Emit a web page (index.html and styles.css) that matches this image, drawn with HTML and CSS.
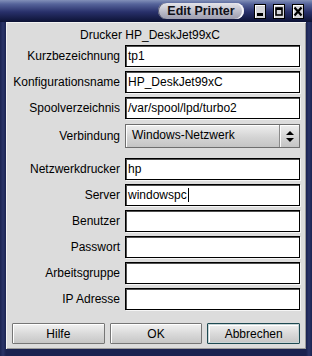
FILE: index.html
```html
<!DOCTYPE html>
<html lang="de">
<head>
    <meta charset="UTF-8">
    <meta name="viewport" content="width=device-width, initial-scale=1.0">
    <title>Edit Printer</title>
    <link rel="stylesheet" href="styles.css">
</head>
<body>
    <div class="window">
        <div class="titlebar">
            <div class="title">Edit Printer</div>
            <div class="wm-buttons">
                <span class="wm-btn">
                    <svg width="10" height="13" viewBox="0 0 10 13"><rect x="2" y="8" width="6" height="3" fill="#000"/></svg>
                </span>
                <span class="wm-btn">
                    <svg width="10" height="13" viewBox="0 0 10 13"><rect x="2" y="3" width="6" height="7" fill="none" stroke="#000" stroke-width="1.6"/><rect x="2" y="3" width="6" height="2" fill="#000"/></svg>
                </span>
                <span class="wm-btn">
                    <svg width="10" height="13" viewBox="0 0 10 13"><path d="M1.5 2.5 L8.5 10.5 M8.5 2.5 L1.5 10.5" stroke="#000" stroke-width="2.2"/></svg>
                </span>
            </div>
        </div>

        <div class="dialog">
            <div class="heading">Drucker HP_DeskJet99xC</div>

            <div class="form-grid">
                <label>Kurzbezeichnung</label>
                <div class="field">tp1</div>
                <label>Konfigurationsname</label>
                <div class="field">HP_DeskJet99xC</div>
                <label>Spoolverzeichnis</label>
                <div class="field">/var/spool/lpd/turbo2</div>
                <label class="combo-label">Verbindung</label>
                <div class="combo">
                    <span class="combo-text">Windows-Netzwerk</span>
                    <span class="combo-arrow">
                        <svg width="8" height="11" viewBox="0 0 8 11"><path d="M4 0 L8 4 L0 4 Z M0 7 L8 7 L4 11 Z" fill="#000"/></svg>
                    </span>
                </div>
            </div>

            <div class="form-grid second">
                <label>Netzwerkdrucker</label>
                <div class="field">hp</div>
                <label>Server</label>
                <div class="field">windowspc<span class="caret"></span></div>
                <label>Benutzer</label>
                <div class="field"></div>
                <label>Passwort</label>
                <div class="field"></div>
                <label>Arbeitsgruppe</label>
                <div class="field"></div>
                <label>IP Adresse</label>
                <div class="field"></div>
            </div>

            <div class="buttons">
                <button type="button">Hilfe</button>
                <button type="button">OK</button>
                <button type="button" class="default">Abbrechen</button>
            </div>
        </div>
    </div>
</body>
</html>
```

FILE: styles.css
```css
* {
    box-sizing: border-box;
}

body {
    margin: 0;
    padding: 0;
    background-color: #dcdcdc;
    font-family: "Liberation Sans", Arial, sans-serif;
    font-size: 12px;
    color: #000;
}

.window {
    width: 312px;
    height: 356px;
    display: flex;
    flex-direction: column;
    background: linear-gradient(90deg, #1a2250 0, #2a3468 3px, #1a2250 6px, #1a2250 306px, #2a3468 309px, #1a2250 312px);
}

.titlebar {
    height: 22px;
    display: flex;
    align-items: flex-start;
    justify-content: flex-end;
    padding: 3px 8px 0 0;
    background: linear-gradient(#8290b8 0, #56649a 4px, #28306a 12px, #0c1234 22px);
}

.title {
    height: 16px;
    width: 86px;
    margin-right: 10px;
    border-radius: 8px;
    background: linear-gradient(#e4e4ea, #b8b8c6 60%, #9c9cae);
    box-shadow: inset -2px 0 0 #f4f4f8, inset 1px 0 0 #505470;
    font-size: 12.5px;
    font-weight: bold;
    line-height: 16px;
    text-align: center;
    color: #101018;
}

.wm-buttons {
    display: flex;
    gap: 7px;
    padding-top: 1px;
}

.wm-btn {
    width: 12px;
    height: 15px;
    display: flex;
    align-items: center;
    justify-content: center;
    background: #d4d4d8;
    border: 1px solid #000;
    box-shadow: inset 1px 1px 0 #fff;
}

.dialog {
    flex: 1;
    margin: 0 6px 7px;
    padding: 6px 6px 5px;
    background-color: #dcdcdc;
    box-shadow: inset 1px 1px 0 #f2f2f2, inset -1px -1px 0 #9a9a9a;
}

.heading {
    height: 14px;
    line-height: 14px;
    margin-bottom: 3px;
    padding-right: 12px;
    text-align: center;
}

.form-grid {
    display: grid;
    grid-template-columns: 108px 175px;
    column-gap: 5px;
    row-gap: 4px;
}

.form-grid.second {
    margin-top: 10px;
}

label {
    line-height: 22px;
    text-align: right;
    white-space: nowrap;
}

.field {
    height: 22px;
    line-height: 20px;
    padding-left: 2px;
    background-color: #fff;
    border: 1px solid #000;
    box-shadow: inset 1px 1px 0 #505050, 1px 1px 0 #f6f6f6;
    white-space: nowrap;
}

.caret {
    display: inline-block;
    width: 1px;
    height: 14px;
    margin-left: 1px;
    vertical-align: -3px;
    background-color: #000;
}

.combo-label {
    margin-top: 1px;
    line-height: 24px;
}

.combo {
    height: 24px;
    margin-top: 1px;
    display: flex;
    align-items: stretch;
    background: linear-gradient(#efefef, #d4d4d4 55%, #c4c4c4);
    border: 1px solid #6e6e6e;
    box-shadow: inset 1px 1px 0 #fff;
}

.combo-text {
    flex: 1;
    padding-left: 6px;
    line-height: 21px;
}

.combo-arrow {
    width: 20px;
    display: flex;
    align-items: center;
    justify-content: center;
    border-left: 1px solid #8a8a8a;
    box-shadow: inset 1px 0 0 #fafafa;
}

.buttons {
    display: flex;
    gap: 5px;
    margin-top: 13px;
}

button {
    flex: 1;
    height: 21px;
    padding: 0;
    font-family: "Liberation Sans", Arial, sans-serif;
    font-size: 12px;
    color: #000;
    background: linear-gradient(#f2f2f2, #dadada 50%, #c6c6c6);
    border: 1px solid #767676;
    border-radius: 1px;
    box-shadow: inset 1px 1px 0 #fff;
    cursor: pointer;
}

button.default {
    border-color: #1e4a52;
    box-shadow: inset 0 0 0 1px #c8d4d6, inset 2px 2px 0 #fff;
}
```
